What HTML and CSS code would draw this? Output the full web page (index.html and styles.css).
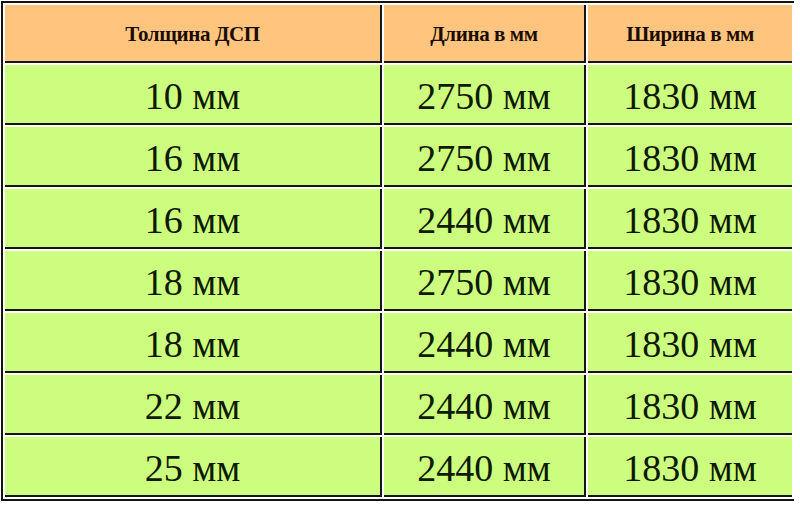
FILE: index.html
```html
<!DOCTYPE html>
<html lang="ru">
<head>
<meta charset="utf-8">
<title>Размеры ДСП</title>
<link rel="stylesheet" href="styles.css">
</head>
<body>
<table class="sizes">
  <colgroup>
    <col class="c1"><col class="c2"><col class="c3">
  </colgroup>
  <thead>
    <tr class="head">
      <th>Толщина ДСП</th>
      <th>Длина в мм</th>
      <th class="last">Ширина в мм</th>
    </tr>
  </thead>
  <tbody>
    <tr><td>10 мм</td><td>2750 мм</td><td class="last">1830 мм</td></tr>
    <tr><td>16 мм</td><td>2750 мм</td><td class="last">1830 мм</td></tr>
    <tr><td>16 мм</td><td>2440 мм</td><td class="last">1830 мм</td></tr>
    <tr><td>18 мм</td><td>2750 мм</td><td class="last">1830 мм</td></tr>
    <tr><td>18 мм</td><td>2440 мм</td><td class="last">1830 мм</td></tr>
    <tr><td>22 мм</td><td>2440 мм</td><td class="last">1830 мм</td></tr>
    <tr><td>25 мм</td><td>2440 мм</td><td class="last">1830 мм</td></tr>
  </tbody>
</table>
</body>
</html>
```

FILE: styles.css
```css
html, body {
  margin: 0;
  padding: 0;
  background: #ffffff;
}

.sizes {
  margin: 1px 0 0 1px;
  border-collapse: separate;
  border-spacing: 2px;
  border-top: 2px solid #151515;
  border-left: 2px solid #151515;
  border-bottom: 2px solid #151515;
  table-layout: fixed;
  width: 793px;
  font-family: "Liberation Serif", "Times New Roman", serif;
  color: #0d1a05;
}

.c1 { width: 377px; }
.c2 { width: 202px; }
.c3 { width: 204px; }

.sizes th,
.sizes td {
  padding: 0;
  text-align: center;
  vertical-align: middle;
  border-right: 2px solid #151515;
  border-bottom: 2px solid #151515;
}

.sizes th.last,
.sizes td.last {
  border-right: none;
}

.head {
  height: 58px;
}

.sizes th {
  background: #ffc57e;
  font-size: 21px;
  font-weight: bold;
  color: #1a0d05;
  letter-spacing: -0.4px;
  padding-top: 2px;
}

.sizes tbody tr {
  height: 60px;
}

.sizes td {
  background: #cdfd7e;
  font-size: 38px;
  font-weight: normal;
  padding-top: 3px;
}
```
